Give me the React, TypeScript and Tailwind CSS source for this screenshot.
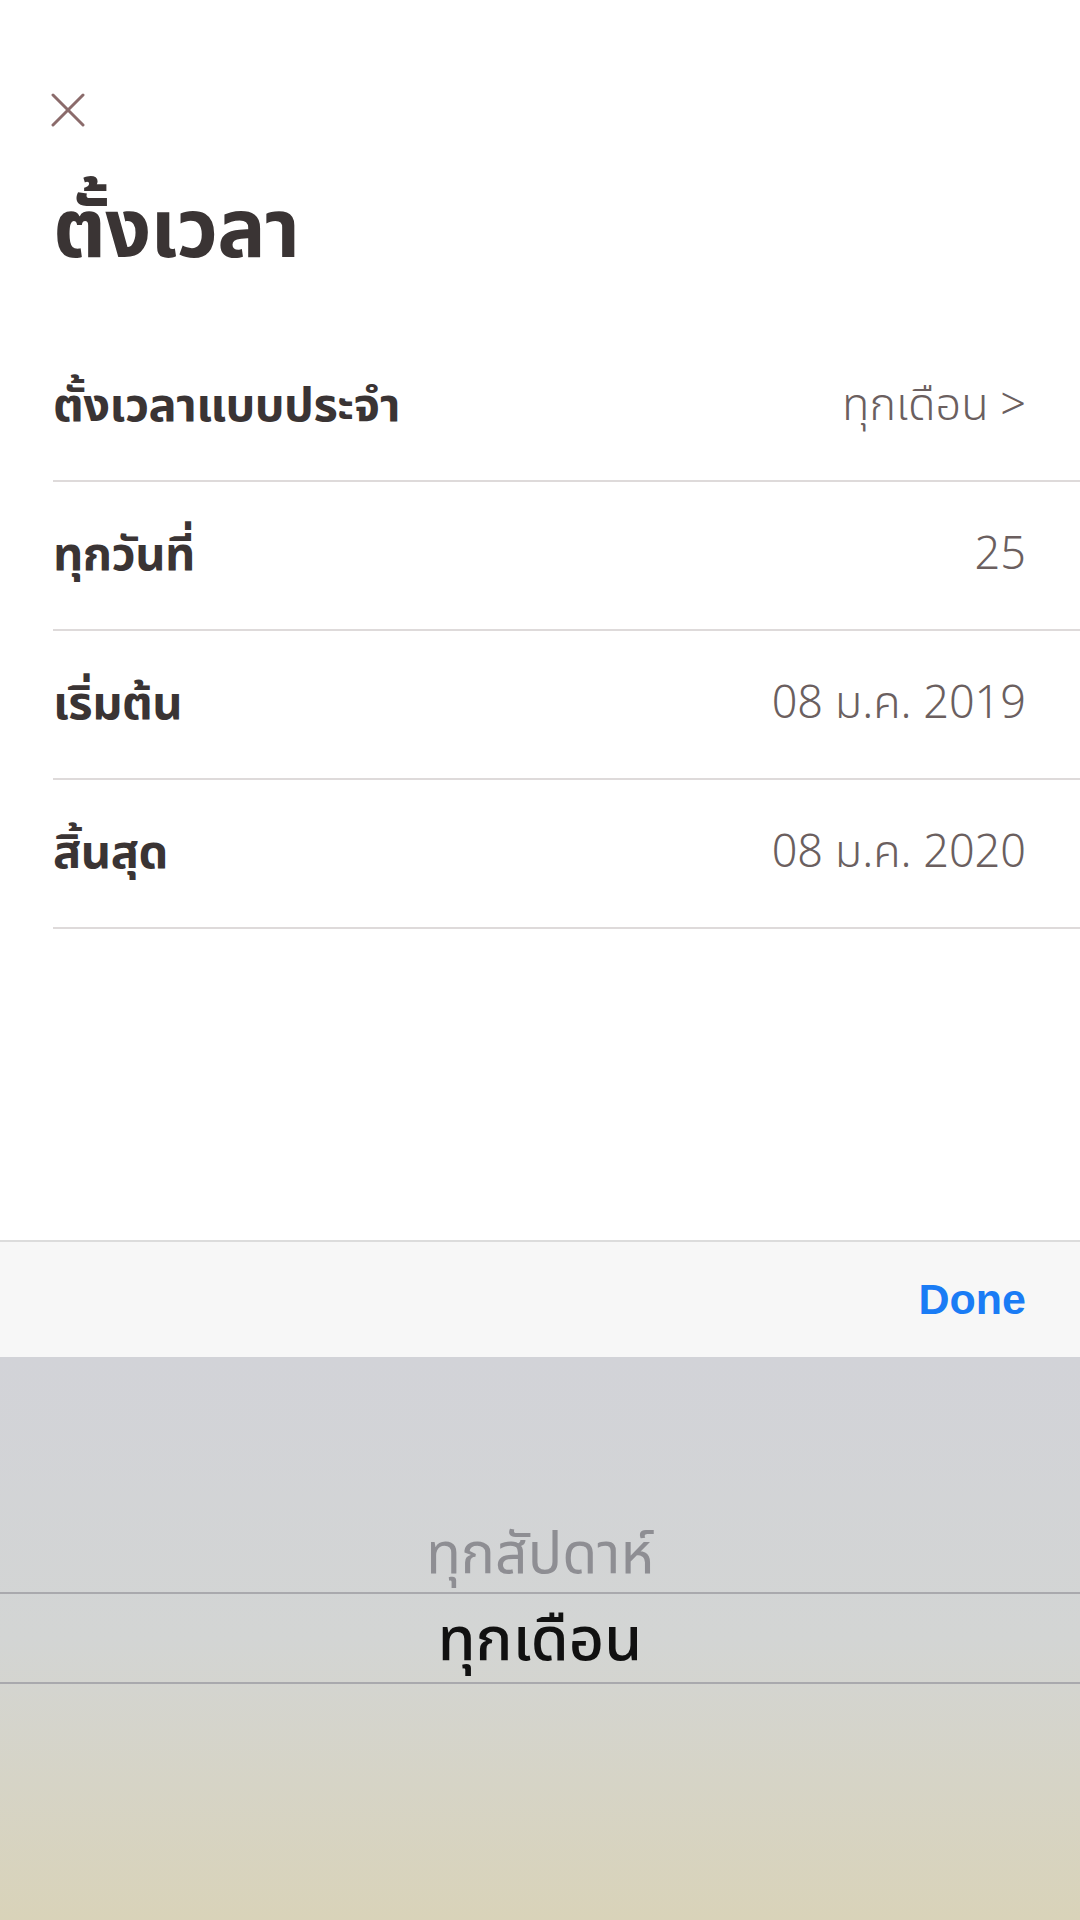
import React from "react";

const thai = '"Noto Sans Thai", "Noto Sans Thai Looped", "Sukhumvit Set", Loma, Garuda, "Noto Sans", sans-serif';

const rows = [
  { label: "ตั้งเวลาแบบประจำ", value: "ทุกเดือน >" },
  { label: "ทุกวันที่", value: "25" },
  { label: "เริ่มต้น", value: "08 ม.ค. 2019" },
  { label: "สิ้นสุด", value: "08 ม.ค. 2020" },
];

export default function App() {
  return (
    <div className="w-[1080px] h-[1920px] flex flex-col bg-white overflow-hidden" style={{ fontFamily: thai }}>
      <div className="flex-1 flex flex-col pl-[53px]">
        <div className="pt-[93px] h-[127px]">
          <svg width="34" height="34" viewBox="0 0 34 34" className="-ml-[2px]">
            <line x1="2" y1="2" x2="32" y2="32" stroke="#8b6b6b" strokeWidth="3" strokeLinecap="round" />
            <line x1="32" y1="2" x2="2" y2="32" stroke="#8b6b6b" strokeWidth="3" strokeLinecap="round" />
          </svg>
        </div>
        <div className="h-[206px] flex items-center">
          <h1 className="text-[81px] font-bold leading-none text-[#3a3434] tracking-[-1px] pt-[4px]">ตั้งเวลา</h1>
        </div>
        <div className="flex flex-col">
          {rows.map((r) => (
            <div key={r.label} className="h-[149px] flex items-center justify-between border-b-2 border-[#dedada] pr-[54px]">
              <span className="text-[47px] font-bold text-[#3a3434] leading-none tracking-[-0.5px]">{r.label}</span>
              <span className="text-[45px] font-light text-[#6b5f5f] leading-none">{r.value}</span>
            </div>
          ))}
        </div>
      </div>
      <div className="h-[117px] shrink-0 bg-[#f7f7f7] border-t-2 border-[#dcdcdc] flex items-center justify-end pr-[54px]">
        <span className="text-[43px] font-semibold text-[#1a7cf5] leading-none" style={{ fontFamily: '"Liberation Sans", Arial, sans-serif' }}>Done</span>
      </div>
      <div className="h-[563px] shrink-0 flex flex-col pt-[149px] bg-gradient-to-b from-[#d2d3d8] via-[#d3d5d4] to-[#d9d3b9]">
        <div className="h-[86px] flex items-center justify-center text-[57px] text-[#8e8e93] leading-none pt-[14px]">ทุกสัปดาห์</div>
        <div className="h-[92px] flex items-center justify-center border-y-2 border-[#a9a9ad] text-[61px] font-medium text-[#111111] leading-none pt-[6px]">ทุกเดือน</div>
      </div>
    </div>
  );
}
